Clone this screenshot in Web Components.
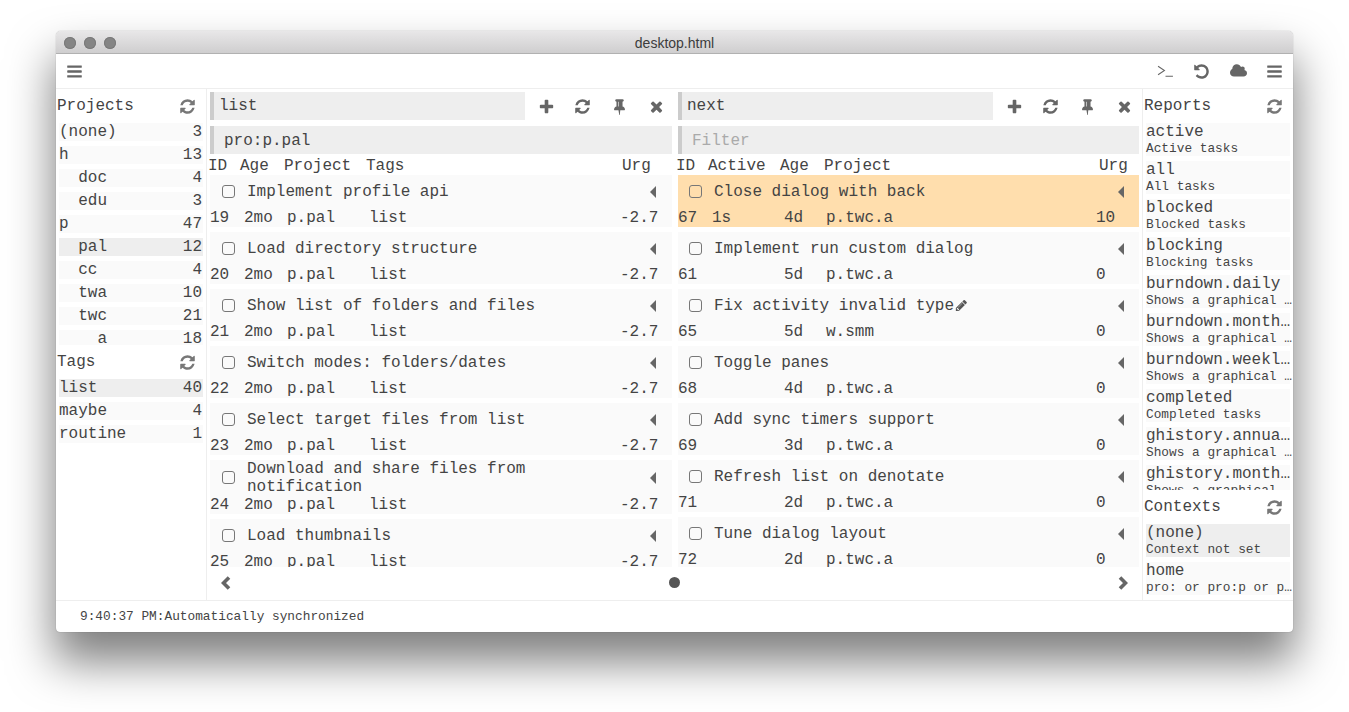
<!DOCTYPE html>
<html lang="en">
<head>
<meta charset="utf-8">
<title>desktop.html</title>
<style>
  html, body { margin: 0; height: 712px; overflow: hidden; background: #fff; }
  body {
    padding: 31px 0 0 56px;
    box-sizing: border-box;
    font: 16px/18px "Liberation Mono", monospace;
    color: #444;
  }
</style>
</head>
<body>

<mac-window caption="desktop.html">
  <top-bar slot="toolbar"></top-bar>

  <side-panel slot="left" caption="Projects" style="height:256px">
    <count-item name="(none)" count="3"></count-item>
    <count-item name="h" count="13"></count-item>
    <count-item name="doc" count="4" level="1"></count-item>
    <count-item name="edu" count="3" level="1"></count-item>
    <count-item name="p" count="47"></count-item>
    <count-item name="pal" count="12" level="1" selected></count-item>
    <count-item name="cc" count="4" level="1"></count-item>
    <count-item name="twa" count="10" level="1"></count-item>
    <count-item name="twc" count="21" level="1"></count-item>
    <count-item name="a" count="18" level="2"></count-item>
  </side-panel>
  <side-panel slot="left" caption="Tags">
    <count-item name="list" count="40" selected></count-item>
    <count-item name="maybe" count="4"></count-item>
    <count-item name="routine" count="1"></count-item>
  </side-panel>

  <task-pane slot="pane" report="list" filter="pro:p.pal" class="first"
             heads="ID,Age,Project,Tags,Urg">
    <task-card title-text="Implement profile api" cells="19,2mo,p.pal,list,-2.7"></task-card>
    <task-card title-text="Load directory structure" cells="20,2mo,p.pal,list,-2.7"></task-card>
    <task-card title-text="Show list of folders and files" cells="21,2mo,p.pal,list,-2.7"></task-card>
    <task-card title-text="Switch modes: folders/dates" cells="22,2mo,p.pal,list,-2.7"></task-card>
    <task-card title-text="Select target files from list" cells="23,2mo,p.pal,list,-2.7"></task-card>
    <task-card title-text="Download and share files from notification" cells="24,2mo,p.pal,list,-2.7" tall></task-card>
    <task-card title-text="Load thumbnails" cells="25,2mo,p.pal,list,-2.7"></task-card>
  </task-pane>

  <task-pane slot="pane" report="next" class="second"
             heads="ID,Active,Age,Project,Urg">
    <task-card title-text="Close dialog with back" cells="67,1s,4d,p.twc.a,10" active></task-card>
    <task-card title-text="Implement run custom dialog" cells="61,,5d,p.twc.a,0"></task-card>
    <task-card title-text="Fix activity invalid type" cells="65,,5d,w.smm,0" edited></task-card>
    <task-card title-text="Toggle panes" cells="68,,4d,p.twc.a,0"></task-card>
    <task-card title-text="Add sync timers support" cells="69,,3d,p.twc.a,0"></task-card>
    <task-card title-text="Refresh list on denotate" cells="71,,2d,p.twc.a,0"></task-card>
    <task-card title-text="Tune dialog layout" cells="72,,2d,p.twc.a,0"></task-card>
  </task-pane>

  <pager-bar slot="pager"></pager-bar>

  <side-panel slot="right" caption="Reports" grow>
    <report-item name="active" note="Active tasks"></report-item>
    <report-item name="all" note="All tasks"></report-item>
    <report-item name="blocked" note="Blocked tasks"></report-item>
    <report-item name="blocking" note="Blocking tasks"></report-item>
    <report-item name="burndown.daily" note="Shows a graphical …"></report-item>
    <report-item name="burndown.month…" note="Shows a graphical …"></report-item>
    <report-item name="burndown.weekl…" note="Shows a graphical …"></report-item>
    <report-item name="completed" note="Completed tasks"></report-item>
    <report-item name="ghistory.annua…" note="Shows a graphical …"></report-item>
    <report-item name="ghistory.month…" note="Shows a graphical …"></report-item>
  </side-panel>
  <side-panel slot="right" caption="Contexts" style="padding-bottom:5px">
    <report-item name="(none)" note="Context not set" selected></report-item>
    <report-item name="home" note="pro: or pro:p or p…"></report-item>
  </side-panel>

  <span slot="status">9:40:37 PM:Automatically synchronized</span>
</mac-window>

<script>
// Iconos: trazados de 1792 de lado, salvo los que traen su propio viewBox
const ICONS = {
  bars: { d: "M1664 1344v128q0 26-19 45t-45 19H192q-26 0-45-19t-19-45v-128q0-26 19-45t45-19h1408q26 0 45 19t19 45zm0-512v128q0 26-19 45t-45 19H192q-26 0-45-19t-19-45V832q0-26 19-45t45-19h1408q26 0 45 19t19 45zm0-512v128q0 26-19 45t-45 19H192q-26 0-45-19t-19-45V320q0-26 19-45t45-19h1408q26 0 45 19t19 45z" },
  refresh: { d: "M1639 1056q0 5-1 7-64 268-268 434.500t-478 166.500q-146 0-282.500-55t-243.500-157l-129 129q-19 19-45 19t-45-19-19-45v-448q0-26 19-45t45-19h448q26 0 45 19t19 45-19 45l-137 137q71 66 161 102t187 36q134 0 250-65t186-179q11-17 53-117 8-23 30-23h192q13 0 22.500 9.500t9.500 22.500zm25-800v448q0 26-19 45t-45 19h-448q-26 0-45-19t-19-45 19-45l138-138q-148-137-349-137-134 0-250 65t-186 179q-11 17-53 117-8 23-30 23h-199q-13 0-22.500-9.500t-9.500-22.500v-7q65-268 270-434.500t480-166.500q146 0 284 55.500t245 156.500l130-129q19-19 45-19t45 19 19 45z" },
  plus: { d: "M1600 736v192q0 40-28 68t-68 28h-416v416q0 40-28 68t-68 28H800q-40 0-68-28t-28-68v-416H288q-40 0-68-28t-28-68V736q0-40 28-68t68-28h416V224q0-40 28-68t68-28h192q40 0 68 28t28 68v416h416q40 0 68 28t28 68z", box: "0 -64 1792 1792" },
  pin: { d: "M800 864V416q0-14-9-23t-23-9-23 9-9 23v448q0 14 9 23t23 9 23-9 9-23zm672 352q0 26-19 45t-45 19H979l-51 483q-2 12-10.500 20.500T897 1792h-1q-27 0-32-27l-76-485H384q-26 0-45-19t-19-45q0-123 78.500-221.500T576 896V384q-52 0-90-38t-38-90 38-90 90-38h640q52 0 90 38t38 90-38 90-90 38v512q99 0 177.500 98.500T1472 1216z" },
  times: { d: "M1490 1322q0 40-28 68l-136 136q-28 28-68 28t-68-28L896 1232l-294 294q-28 28-68 28t-68-28l-136-136q-28-28-28-68t28-68l294-294-294-294q-28-28-28-68t28-68l136-136q28-28 68-28t68 28l294 294 294-294q28-28 68-28t68 28l136 136q28 28 28 68t-28 68l-294 294 294 294q28 28 28 68z" },
  cloud: { d: "M1856 1088q0 159-112.500 271.500t-271.500 112.500h-1088q-185 0-316.500-131.500t-131.500-316.500q0-132 71-241.500t187-163.500q-2-28-2-43 0-212 150-362t362-150q158 0 286.500 88t187.500 230q70-62 166-62 106 0 181 75t75 181q0 75-41 138 129 30 213 134.500t84 239.500z", box: "-64 0 1920 1792" },
  undo: { d: "M1664 896q0 156-61 298t-164 245-245 164-298 61q-172 0-327-72.500T305 1387q-7-10-6.500-22.500t8.500-20.500l137-138q10-9 25-9 16 2 23 12 73 95 179 147t225 52q104 0 198.500-40.500t163.500-109.500 109.500-163.500T1408 896t-40.500-198.500T1258 534t-163.500-109.500T896 384q-98 0-188 35.500T548 521l137 138q31 30 14 69-17 40-59 40H192q-26 0-45-19t-19-45V256q0-42 40-59 39-17 69 14l130 129q107-101 244.500-156.500T896 128q156 0 298 61t245 164 164 245 61 298z" },
  pencil: { d: "M491 1536l91-91-235-235-91 91v107h128v128h107zm523-928q0-22-22-22-10 0-17 7l-542 542q-7 7-7 17 0 22 22 22 10 0 17-7l542-542q7-7 7-17zm-54-192l416 416-832 832H128v-416zm683 96q0 53-37 90l-166 166-416-416 166-165q36-38 90-38 53 0 91 38l235 234q37 39 37 91z", box: "0 0 1536 1792" },
  caret: { d: "M6 0v12L0 6z", box: "0 0 6 12" },
  left: { d: "M8 1.500 2.500 7 8 12.500", box: "0 0 10 14", line: 3.6 },
  right: { d: "M2 1.500 7.500 7 2 12.500", box: "0 0 10 14", line: 3.6 },
  terminal: { d: "M1 1 7 5 1 9M8 10.500h7", box: "0 0 16 12", line: 1 }
};

class FaIcon extends HTMLElement {
  connectedCallback() {
    const icon = ICONS[this.getAttribute("name")];
    const paint = icon.line
      ? `fill="none" stroke="currentColor" stroke-width="${icon.line}"`
      : `fill="currentColor"`;
    this.attachShadow({ mode: "open" }).innerHTML = `
      <style>
        :host { display: inline-flex; width: var(--size, 17px); height: var(--size, 17px); color: var(--tint, #666); }
        svg { width: 100%; height: 100%; display: block; }
      </style>
      <svg viewBox="${icon.box || "0 0 1792 1792"}"><path ${paint} d="${icon.d}"/></svg>`;
  }
}
customElements.define("fa-icon", FaIcon);

class MacWindow extends HTMLElement {
  connectedCallback() {
    this.attachShadow({ mode: "open" }).innerHTML = `
      <style>
        :host {
          display: flex; flex-direction: column;
          width: 1237px; height: 601px;
          background: #fff; border-radius: 5px 5px 4px 4px;
          box-shadow: 0 28px 45px 2px rgba(0,0,0,.5), 0 0 1px rgba(0,0,0,.45);
          overflow: hidden;
        }
        .title {
          height: 23px; flex: none; position: relative; box-sizing: border-box; padding-top: 2px;
          display: flex; align-items: center; justify-content: center;
          background: linear-gradient(#e8e7e8, #cfcecf);
          border-bottom: 1px solid #b1b1b1;
          font: 14px/18px "Liberation Sans", sans-serif; color: #3c3c3c;
        }
        .lights { position: absolute; left: 8px; top: 6px; display: flex; gap: 8px; }
        .lights i { width: 12px; height: 12px; border-radius: 50%; background: #858585; box-shadow: inset 0 0 0 1px #7a7a7a; }
        .main { flex: 1; min-height: 0; display: flex; }
        .left { width: 150px; flex: none; border-right: 1px solid #eee; display: flex; flex-direction: column; }
        .right { width: 150px; flex: none; border-left: 1px solid #eee; display: flex; flex-direction: column; }
        .center { flex: 1; min-width: 0; display: flex; flex-direction: column; }
        .panes { flex: 1; min-height: 0; display: grid; grid-template-columns: 468px 467px; }
        .status {
          height: 32px; flex: none; box-sizing: border-box; border-top: 1px solid #eee;
          padding: 0 0 1px 24px; display: flex; align-items: center;
          font-size: 12.8px; line-height: 15px;
        }
      </style>
      <div class="title"><div class="lights"><i></i><i></i><i></i></div>${this.getAttribute("caption")}</div>
      <slot name="toolbar"></slot>
      <div class="main">
        <div class="left"><slot name="left"></slot></div>
        <div class="center">
          <div class="panes"><slot name="pane"></slot></div>
          <slot name="pager"></slot>
        </div>
        <div class="right"><slot name="right"></slot></div>
      </div>
      <div class="status"><slot name="status"></slot></div>`;
  }
}
customElements.define("mac-window", MacWindow);

class TopBar extends HTMLElement {
  connectedCallback() {
    this.attachShadow({ mode: "open" }).innerHTML = `
      <style>
        :host {
          display: flex; flex: none; align-items: center; justify-content: space-between;
          height: 34px; border-bottom: 1px solid #eee; padding: 0 10px;
        }
        div { display: flex; align-items: center; gap: 19.4px; }
      </style>
      <fa-icon name="bars"></fa-icon>
      <div>
        <fa-icon name="terminal"></fa-icon>
        <fa-icon name="undo"></fa-icon>
        <fa-icon name="cloud"></fa-icon>
        <fa-icon name="bars"></fa-icon>
      </div>`;
  }
}
customElements.define("top-bar", TopBar);

class SidePanel extends HTMLElement {
  connectedCallback() {
    this.attachShadow({ mode: "open" }).innerHTML = `
      <style>
        :host { display: flex; flex-direction: column; min-height: 0; flex: ${this.hasAttribute("grow") ? "1" : "none"}; }
        header {
          height: 34px; flex: none; display: flex; align-items: center; justify-content: space-between;
          padding: 0 10px 0 1px;
          --tint: #777;
        }
        .items { flex: 1; min-height: 0; overflow: hidden; display: flex; flex-direction: column; gap: 5px; padding: 0 3px; }
      </style>
      <header><span>${this.getAttribute("caption")}</span><fa-icon name="refresh"></fa-icon></header>
      <div class="items"><slot></slot></div>`;
  }
}
customElements.define("side-panel", SidePanel);

class CountItem extends HTMLElement {
  connectedCallback() {
    const level = Number(this.getAttribute("level") || 0);
    this.attachShadow({ mode: "open" }).innerHTML = `
      <style>
        :host {
          display: flex; flex: none; justify-content: space-between;
          height: 18px; padding-right: 1px;
          background: ${this.hasAttribute("selected") ? "#eee" : "#fafafa"};
        }
        .name { padding-left: ${level * 19.2}px; }
      </style>
      <span class="name">${this.getAttribute("name")}</span><span>${this.getAttribute("count")}</span>`;
  }
}
customElements.define("count-item", CountItem);

class ReportItem extends HTMLElement {
  connectedCallback() {
    this.attachShadow({ mode: "open" }).innerHTML = `
      <style>
        :host {
          display: block; flex: none; height: 33px;
          background: ${this.hasAttribute("selected") ? "#eee" : "#fafafa"};
        }
        div { white-space: nowrap; }
        .note { font-size: 12.8px; line-height: 15px; }
      </style>
      <div>${this.getAttribute("name")}</div>
      <div class="note">${this.getAttribute("note")}</div>`;
  }
}
customElements.define("report-item", ReportItem);

class TaskPane extends HTMLElement {
  connectedCallback() {
    const filter = this.getAttribute("filter");
    const heads = this.getAttribute("heads").split(",");
    const first = this.classList.contains("first");
    // Cada panel tiene sus propias columnas, como en una tabla
    const headCols = first ? "32px 44px 82px 1fr 50px" : "32px 72px 44px 1fr 40px";
    const rowCols = first ? "34px 43px 82px 1fr 52px" : "34px 72px 42px 1fr 43px";
    this.attachShadow({ mode: "open" }).innerHTML = `
      <style>
        :host {
          display: flex; flex-direction: column; min-width: 0; min-height: 0;
          padding: 3px 3px 0; --row-cols: ${rowCols};
          --pad-l: ${first ? 12 : 11}px; --pad-r: ${first ? 16 : 15}px;
        }
        .top { display: flex; height: 28px; flex: none; }
        .bar {
          background: #eee; border-left: 4px solid #ccc;
          display: flex; align-items: center; box-sizing: border-box;
        }
        .report { width: 315px; flex: none; padding-left: 5px; }
        .tools { flex: 1; min-width: 0; display: grid; grid-template-columns: repeat(4, 36.7px); padding-left: 2.7px; place-items: center; --tint: #666; }
        .filter { height: 28px; flex: none; margin-top: 6px; padding: 2px 0 0 10px; }
        .filter .hint { color: #aaa; }
        .heads {
          height: 21px; flex: none; margin-left: -2px; align-items: center; padding-top: 2px; box-sizing: border-box;
          display: grid; grid-template-columns: ${headCols};
        }
        .heads span { white-space: nowrap; }
        .list { flex: 1; min-height: 0; overflow: hidden; display: flex; flex-direction: column; gap: 5px; }
      </style>
      <div class="top">
        <div class="bar report">${this.getAttribute("report")}</div>
        <div class="tools">
          <fa-icon name="plus"></fa-icon><fa-icon name="refresh"></fa-icon>
          <fa-icon name="pin"></fa-icon><fa-icon name="times"></fa-icon>
        </div>
      </div>
      <div class="bar filter">${filter ? filter : '<span class="hint">Filter</span>'}</div>
      <div class="heads">${heads.map(h => `<span>${h}</span>`).join("")}</div>
      <div class="list"><slot></slot></div>`;
  }
}
customElements.define("task-pane", TaskPane);

class TaskCard extends HTMLElement {
  connectedCallback() {
    const tall = this.hasAttribute("tall");
    const cells = this.getAttribute("cells").split(",");
    const pencil = this.hasAttribute("edited")
      ? '<fa-icon name="pencil" style="--size:13px;--tint:#555"></fa-icon>' : "";
    this.attachShadow({ mode: "open" }).innerHTML = `
      <style>
        :host {
          display: block; flex: none;
          background: ${this.hasAttribute("active") ? "#ffdead" : "#fafafa"};
        }
        .head { height: ${tall ? 34 : 32}px; display: flex; align-items: center; padding: 0 var(--pad-r) 0 var(--pad-l); }
        .check {
          width: 13px; height: 13px; flex: none; box-sizing: border-box; margin-right: 12px;
          border: 1.5px solid #777; border-radius: 3px;
        }
        .text { flex: 1; min-width: 0; display: block; padding-top: 2px; }
        .text fa-icon { vertical-align: -2px; }
        .caret { flex: none; margin-left: 8px; padding-top: 2px; display: flex; }
        .caret fa-icon { width: 6px; height: 12px; }
        .row { display: grid; grid-template-columns: var(--row-cols); height: 20px; padding-top: 2px; box-sizing: border-box; white-space: nowrap; }
      </style>
      <div class="head">
        <span class="check"></span>
        <span class="text">${this.getAttribute("title-text")}${pencil}</span>
        <span class="caret"><fa-icon name="caret"></fa-icon></span>
      </div>
      <div class="row">${cells.map(c => `<span>${c}</span>`).join("")}</div>`;
  }
}
customElements.define("task-card", TaskCard);

class PagerBar extends HTMLElement {
  connectedCallback() {
    this.attachShadow({ mode: "open" }).innerHTML = `
      <style>
        :host { display: flex; flex: none; height: 33px; box-sizing: border-box; align-items: center; justify-content: space-between; padding: 0 14px 2px; --tint: #666; }
        fa-icon { width: 10px; height: 14px; }
        i { width: 11px; height: 11px; border-radius: 50%; background: #555; }
      </style>
      <fa-icon name="left"></fa-icon><i></i><fa-icon name="right"></fa-icon>`;
  }
}
customElements.define("pager-bar", PagerBar);
</script>
</body>
</html>
